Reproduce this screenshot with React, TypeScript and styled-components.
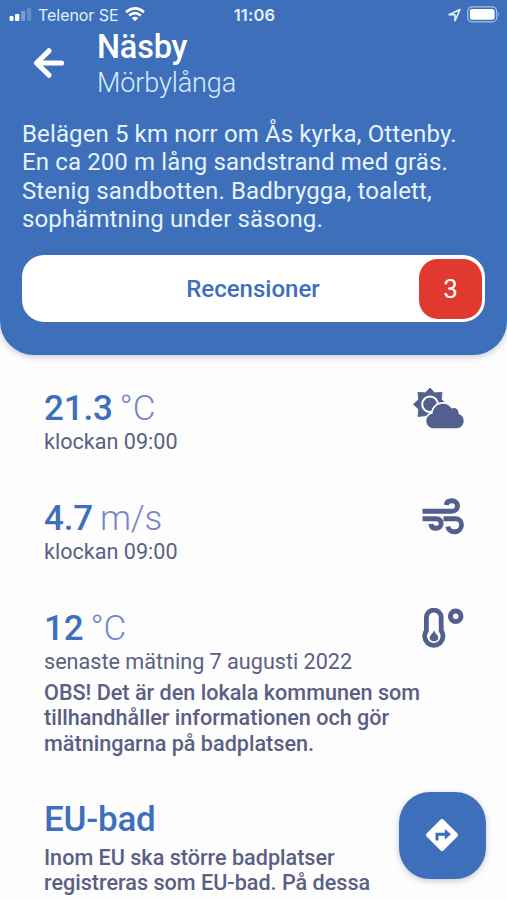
import React from 'react';
import styled, { createGlobalStyle } from 'styled-components';

const Global = createGlobalStyle`
  * { box-sizing: border-box; }
  html, body { margin: 0; height: 900px; overflow: hidden; background: #fdfdfe; }
  body { font-family: Roboto, "Liberation Sans", sans-serif; color: #5a6083; }
  h1, h2, p { margin: 0; }
  svg { display: block; flex: none; }
`;

const blue = '#3d6fbb';
const ink = '#535f8c';

const Screen = styled.div`
  width: 507px;
  height: 900px;
  overflow: hidden;
  position: relative;
`;

const Header = styled.header`
  height: 355px;
  background: ${blue};
  color: #fff;
  border-radius: 0 0 34px 34px;
  box-shadow: 0 2px 6px rgba(40, 50, 80, 0.25);
`;

const StatusBar = styled.div`
  height: 29px;
  padding: 0 7px 0 9px;
  display: grid;
  grid-template-columns: 1fr auto 1fr;
  align-items: center;
  font-family: Inter, "Liberation Sans", sans-serif;
  font-size: 16px;
  color: #e2f0ff;
`;

const StatusGroup = styled.div<{ $end?: boolean }>`
  display: flex;
  align-items: center;
  justify-content: ${(p) => (p.$end ? 'flex-end' : 'flex-start')};
  gap: 6px;
`;

const Carrier = styled.span`
  letter-spacing: -0.05px;
  white-space: nowrap;
`;

const Clock = styled.time`
  font-weight: 600;
  font-size: 16.5px;
  letter-spacing: 0.2px;
`;

const TitleBar = styled.div`
  display: flex;
  height: 87px;
  padding-left: 32px;
`;

const BackButton = styled.button`
  border: 0;
  padding: 18px 0 0;
  width: 65px;
  background: none;
  display: flex;
  align-items: flex-start;
`;

const Title = styled.h1`
  font-size: 32.5px;
  line-height: 37px;
  font-weight: 500;
  letter-spacing: -0.2px;
`;

const Subtitle = styled.p`
  font-size: 27px;
  line-height: 35px;
  font-weight: 300;
  letter-spacing: -0.1px;
  color: #d9ebff;
`;

const Description = styled.p`
  padding: 4px 0 0 22px;
  font-size: 24px;
  line-height: 28.4px;
  letter-spacing: 0.12px;
  color: #e6f3ff;
  white-space: pre;
`;

const ReviewButton = styled.button`
  margin: 21px 22px 0;
  width: 463px;
  height: 67px;
  padding: 1px 3px 0 65px;
  border: 0;
  border-radius: 22px;
  background: #fff;
  display: flex;
  align-items: center;
  font-family: inherit;
`;

const ReviewLabel = styled.span`
  flex: 1;
  font-size: 24px;
  font-weight: 500;
  color: ${blue};
`;

const ReviewCount = styled.span`
  width: 63px;
  height: 60px;
  border-radius: 19px;
  background: #e03a30;
  color: #fff;
  font-size: 26px;
  line-height: 60px;
`;

const Content = styled.main`
  padding: 33px 43px 0 44px;
`;

const Measurement = styled.section<{ $height: number }>`
  height: ${(p) => p.$height}px;
  display: flex;
  justify-content: space-between;
  align-items: flex-start;
`;

const Reading = styled.p`
  font-size: 35px;
  line-height: 41px;
  font-weight: 500;
  color: ${blue};
  white-space: nowrap;
  letter-spacing: -0.2px;
`;

const Unit = styled.span`
  margin-left: 7px;
  font-weight: 300;
  color: #7588c6;
`;

const Timestamp = styled.p`
  font-size: 21.6px;
  line-height: 26px;
  margin-bottom: 5px;
  white-space: nowrap;
`;

const Note = styled.p`
  font-size: 21.6px;
  line-height: 25.4px;
  font-weight: 500;
  white-space: pre;
`;

const SectionTitle = styled.h2`
  font-size: 35px;
  line-height: 42px;
  font-weight: 500;
  letter-spacing: -0.2px;
  color: ${blue};
  margin-bottom: 4px;
`;

const DirectionsButton = styled.button`
  position: absolute;
  left: 399px;
  top: 792px;
  width: 87px;
  height: 87px;
  padding: 0 1px 1px 0;
  border: 0;
  border-radius: 31px;
  background: ${blue};
  display: grid;
  place-items: center;
  box-shadow: 0 2px 6px rgba(40, 50, 80, 0.25);
`;

const SignalIcon = () => (
  <svg width="23" height="14" viewBox="0 0 23 14" fill="#fff">
    <rect x="0.5" y="8" width="4" height="5" rx="1" />
    <rect x="6" y="6" width="4.3" height="7" rx="1" />
    <rect x="12" y="3" width="4.3" height="10" rx="1" opacity=".3" />
    <rect x="18" y="0" width="4.3" height="13" rx="1" opacity=".2" />
  </svg>
);

const WifiIcon = () => (
  <svg width="20" height="15" viewBox="0 0 20 15" fill="none" stroke="#fff" strokeWidth="2.7">
    <path d="M1 5.2Q10-2.4 19 5.2M4.2 8.5Q10 3.7 15.8 8.5" />
    <path d="M6.8 11Q10 8.3 13.2 11L10 14.2Z" fill="#fff" stroke="none" />
  </svg>
);

const LocationIcon = () => (
  <svg width="13" height="14" viewBox="0 0 13 14" fill="none" stroke="#e2f0ff" strokeWidth="1.6" strokeLinejoin="round">
    <path d="M1 6.8 12 1.5 7 12.7V6.8Z" />
  </svg>
);

const BatteryIcon = () => (
  <svg width="33" height="17" viewBox="0 0 33 17">
    <rect x=".7" y=".9" width="29" height="15" rx="4.5" fill="none" stroke="#a9c2e9" strokeWidth="1.2" />
    <rect x="2.8" y="3" width="24.8" height="10.8" rx="2.5" fill="#fff" />
    <path d="M31 6Q33 8.4 31 11Z" fill="#88a9dc" />
  </svg>
);

const BackIcon = () => (
  <svg width="33" height="32" viewBox="0 0 33 32" fill="none" stroke="#fff" strokeWidth="5.2" strokeLinecap="round" strokeLinejoin="round">
    <path d="M29.5 16H5M17 3.8 4.5 16 17 28.2" />
  </svg>
);

const CloudSunIcon = () => (
  <svg width="51" height="41" viewBox="0 0 51 41" fill={ink}>
    <path
      d="M17 0 21.7 4.9 29 4.3 28.4 11.6 33.5 16.3 28.4 21 17 28 12.3 27.7 5 28.5 5.6 21 .4 16.3 5.6 11.6 5 4.3 12.3 4.9Z"
      stroke={ink}
      strokeWidth=".8"
      strokeLinejoin="round"
    />
    <circle cx="17" cy="16.3" r="7.8" fill={ink} stroke="#fdfdfe" strokeWidth="2" />
    <path
      d="M21 40.2C16.5 40.2 13.3 37 13.3 32.9 13.3 29.2 16 26.4 19.5 25.8 20 19.6 24.3 15.7 30 15.7 33.8 15.7 36.8 17.7 38.4 20.5 42.5 18.6 46 21.4 45.6 25.9 48.8 26.7 50.7 29.4 50.7 32.7 50.7 37 47.7 40.2 43.5 40.2Z"
      stroke="#fdfdfe"
      strokeWidth="3.4"
      paintOrder="stroke"
    />
  </svg>
);

const WindIcon = () => (
  <svg width="42" height="37" viewBox="0 0 42 37" fill="none" stroke={ink} strokeWidth="4.9" strokeLinecap="butt">
    <path d="M.5 13.3H29C33 13.3 35.5 11 35.5 8 35.5 4.8 33 2.7 29.7 2.7 26.6 2.7 24.6 4.2 24.1 7" />
    <path d="M.5 20.8H14.2C17.5 20.8 19.2 22.8 19.2 25.3 19.2 28.3 17 30.3 14 30.3 11 30.3 9.1 28.6 8.9 26" />
    <path d="M21.5 20.8H33.5C37.2 20.8 39.5 23.2 39.5 26.7 39.5 30.7 36.5 33.8 32.5 33.8 29 33.8 26.5 31.9 25.8 28.5" />
  </svg>
);

const ThermometerIcon = () => (
  <svg width="42" height="42" viewBox="0 0 42 42" fill="none" stroke={ink}>
    <path d="M4.4 9.5A7.4 7.4 0 0 1 19.2 9.5V22.7A9.2 9.2 0 1 1 4.4 22.7Z" strokeWidth="4.8" />
    <circle cx="33.7" cy="8.2" r="5.3" strokeWidth="5" />
    <path d="M12 22.5Q13 25 15.2 27C18 31 14.8 33.3 12 33.3S6 31 8.8 27Q11 25 12 22.5Z" fill={ink} stroke="none" />
  </svg>
);

const DirectionsIcon = () => (
  <svg width="34" height="34" viewBox="0 0 34 34">
    <path d="M17 3 31 17 17 31 3 17Z" fill="#fff" stroke="#fff" strokeWidth="4" strokeLinejoin="round" />
    <path d="M12 22.5V16.2H20.5" fill="none" stroke={blue} strokeWidth="3" />
    <path d="M19.8 10.9 26 16.2 19.8 21.8Z" fill={blue} />
  </svg>
);

interface ReadingBlockProps {
  value: string;
  unit: string;
  time: string;
  height: number;
  icon: React.ReactNode;
  note?: string;
}

const ReadingBlock = ({ value, unit, time, height, icon, note }: ReadingBlockProps) => (
  <Measurement $height={height}>
    <div>
      <Reading>
        {value}
        <Unit>{unit}</Unit>
      </Reading>
      <Timestamp>{time}</Timestamp>
      {note && <Note>{note}</Note>}
    </div>
    {icon}
  </Measurement>
);

export default function App() {
  return (
    <Screen>
      <Global />
      <Header>
        <StatusBar>
          <StatusGroup>
            <SignalIcon />
            <Carrier>Telenor SE</Carrier>
            <WifiIcon />
          </StatusGroup>
          <Clock>11:06</Clock>
          <StatusGroup $end>
            <LocationIcon />
            <BatteryIcon />
          </StatusGroup>
        </StatusBar>
        <TitleBar>
          <BackButton aria-label="Tillbaka">
            <BackIcon />
          </BackButton>
          <div>
            <Title>Näsby</Title>
            <Subtitle>Mörbylånga</Subtitle>
          </div>
        </TitleBar>
        <Description>
          {'Belägen 5 km norr om Ås kyrka, Ottenby.\nEn ca 200 m lång sandstrand med gräs.\nStenig sandbotten. Badbrygga, toalett,\nsophämtning under säsong.'}
        </Description>
        <ReviewButton>
          <ReviewLabel>Recensioner</ReviewLabel>
          <ReviewCount>3</ReviewCount>
        </ReviewButton>
      </Header>
      <Content>
        <ReadingBlock value="21.3" unit="°C" time="klockan 09:00" height={110} icon={<CloudSunIcon />} />
        <ReadingBlock value="4.7" unit="m/s" time="klockan 09:00" height={110} icon={<WindIcon />} />
        <ReadingBlock
          value="12"
          unit="°C"
          time="senaste mätning 7 augusti 2022"
          height={191}
          icon={<ThermometerIcon />}
          note={'OBS! Det är den lokala kommunen som\ntillhandhåller informationen och gör\nmätningarna på badplatsen.'}
        />
        <SectionTitle>EU-bad</SectionTitle>
        <Note>{'Inom EU ska större badplatser\nregistreras som EU-bad. På dessa\nbadplatser kontrolleras bad'}</Note>
      </Content>
      <DirectionsButton aria-label="Vägbeskrivning">
        <DirectionsIcon />
      </DirectionsButton>
    </Screen>
  );
}
